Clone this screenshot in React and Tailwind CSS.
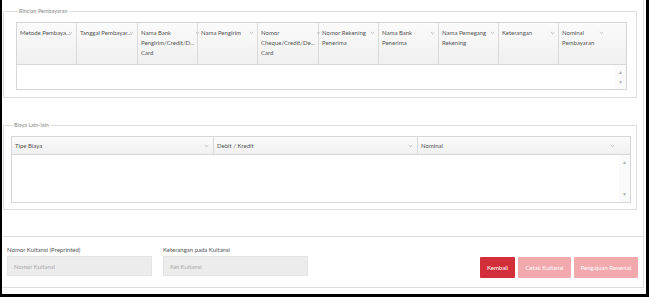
import React from 'react';

const font = { fontFamily: 'Lato, "Open Sans", sans-serif' };

const pembayaranCols = [
  { label: 'Metode Pembayaran', w: 'w-[60px]', nowrap: true },
  { label: 'Tanggal Pembayaran', w: 'w-[61px]', nowrap: true },
  { label: 'Nama Bank Pengirim/Credit/Debit Card', w: 'w-[60px]', lines: ['Nama Bank', 'Pengirim/Credit/D...', 'Card'] },
  { label: 'Nama Pengirim', w: 'w-[60px]' },
  { label: 'Nomor Cheque/Credit/Debit Card', w: 'w-[61px]', lines: ['Nomor', 'Cheque/Credit/De...', 'Card'] },
  { label: 'Nomor Rekening Penerima', w: 'w-[60px]', lines: ['Nomor Rekening', 'Penerima'] },
  { label: 'Nama Bank Penerima', w: 'w-[60px]', lines: ['Nama Bank', 'Penerima'] },
  { label: 'Nama Pemegang Rekening', w: 'w-[60px]', lines: ['Nama Pemegang', 'Rekening'] },
  { label: 'Keterangan', w: 'w-[60px]' },
  { label: 'Nominal Pembayaran', w: 'flex-1', lines: ['Nominal', 'Pembayaran'], last: true },
];

const biayaCols = [
  { label: 'Tipe Biaya', w: 'w-[202px]' },
  { label: 'Debit / Kredit', w: 'w-[204px]' },
  { label: 'Nominal', w: 'flex-1', last: true },
];

function Chevron({ className = '' }) {
  return (
    <svg width="5" height="4" viewBox="0 0 5 4" className={`shrink-0 mt-[3px] ${className}`}>
      <path d="M0.8 1.1 L2.5 2.7 L4.2 1.1" fill="none" stroke="#a8a8a8" strokeWidth="0.7" />
    </svg>
  );
}

function Arrows({ gap }) {
  return (
    <div className={`w-[11px] flex flex-col items-center ${gap} bg-[#fafafa]`}>
      <span className="text-[5px] leading-none text-[#b0b0b0]">▲</span>
      <span className="text-[5px] leading-none text-[#b0b0b0]">▼</span>
    </div>
  );
}

function Fieldset({ title, className, children }) {
  return (
    <fieldset className={`border border-[#dedede] ${className}`}>
      <legend className="ml-[2px] px-[1px] text-[5.5px] leading-[10px] text-[#888]">{title}</legend>
      {children}
    </fieldset>
  );
}

export default function App() {
  return (
    <div className="w-[649px] h-[297px] bg-black pl-[2px] pr-[3px] pb-[3px]" style={font}>
      <div className="h-full bg-white">
        <div className="w-[642px] h-[288px] border-r border-b border-[#dcdcdc] flex flex-col">
          {/* Rincian Pembayaran */}
          <Fieldset title="Rincian Pembayaran" className="mt-[6px] ml-[1px] w-[634px] h-[92px] pl-[12px] pr-[9px] pt-[6px]">
            <div className="border border-[#d6d6d6]">
              <div className="flex h-[42px] bg-gradient-to-b from-[#fbfbfb] to-[#f0f0f0] border-b border-[#d6d6d6]">
                {pembayaranCols.map((c, i) => (
                  <div
                    key={c.label}
                    className={`${c.w} ${i < pembayaranCols.length - 1 ? 'border-r border-[#dadada]' : ''} flex items-start gap-[1px] pl-[3px] pr-[3px] pt-[5px] text-[6px] leading-[10px] text-[#555]`}
                  >
                    {c.nowrap ? (
                      <>
                        <span className="min-w-0 flex-1 truncate whitespace-nowrap">{c.label}</span>
                        <Chevron className="-ml-[5px]" />
                      </>
                    ) : (
                      <>
                        <span className={c.last ? 'w-[36px]' : 'flex-1'}>
                          {(c.lines || [c.label]).map(l => (
                            <span key={l} className="block whitespace-nowrap">{l}</span>
                          ))}
                        </span>
                        <Chevron />
                      </>
                    )}
                  </div>
                ))}
              </div>
              <div className="flex h-[24px]">
                <div className="flex-1" />
                <Arrows gap="justify-center gap-[5px]" />
              </div>
            </div>
          </Fieldset>

          {/* Biaya Lain-lain */}
          <Fieldset title="Biaya Lain-lain" className="mt-[22px] ml-[1px] w-[634px] h-[90px] pl-[7px] pr-[5px] pt-[6px]">
            <div className="border border-[#d6d6d6]">
              <div className="flex h-[18px] bg-gradient-to-b from-[#fbfbfb] to-[#f0f0f0] border-b border-[#d6d6d6]">
                {biayaCols.map((c, i) => (
                  <div
                    key={c.label}
                    className={`${c.w} ${i < biayaCols.length - 1 ? 'border-r border-[#dadada]' : ''} flex items-start justify-between pl-[3px] pr-[4px] pt-[4px] text-[6px] leading-[10px] text-[#555]`}
                  >
                    <span>{c.label}</span>
                    <span className={c.last ? 'mr-[11px]' : ''}><Chevron /></span>
                  </div>
                ))}
              </div>
              <div className="flex h-[47px]">
                <div className="flex-1" />
                <Arrows gap="justify-between py-[5px]" />
              </div>
            </div>
          </Fieldset>

          {/* Kuitansi */}
          <div className="mt-auto h-[51px] border-t border-[#dcdcdc] flex items-start justify-between pl-[5px] pr-[5px]">
            <div className="flex gap-[11px] pt-[8px]">
              <div className="flex flex-col gap-[2px]">
                <span className="text-[6px] leading-[9px] text-[#555]">Nomor Kuitansi (Preprinted)</span>
                <div className="w-[145px] h-[20px] bg-[#ececec] border border-[#e4e4e4] flex items-center pl-[6px] text-[6px] text-[#aaa]">
                  Nomor Kuitansi
                </div>
              </div>
              <div className="flex flex-col gap-[2px]">
                <span className="text-[6px] leading-[9px] text-[#555]">Keterangan pada Kuitansi</span>
                <div className="w-[145px] h-[20px] bg-[#ececec] border border-[#e4e4e4] flex items-center pl-[6px] text-[6px] text-[#aaa]">
                  Ket Kuitansi
                </div>
              </div>
            </div>
            <div className="flex gap-[3px] pt-[20px]">
              <button className="w-[35px] h-[21px] rounded-[1px] bg-[#d32f3a] text-white text-[6px]">Kembali</button>
              <button className="w-[53px] h-[21px] rounded-[1px] bg-[#f1a9ae] text-white text-[6px]">Cetak Kuitansi</button>
              <button className="w-[64px] h-[21px] rounded-[1px] bg-[#f1a9ae] text-white text-[6px]">Pengajuan Reversal</button>
            </div>
          </div>
        </div>
      </div>
    </div>
  );
}
